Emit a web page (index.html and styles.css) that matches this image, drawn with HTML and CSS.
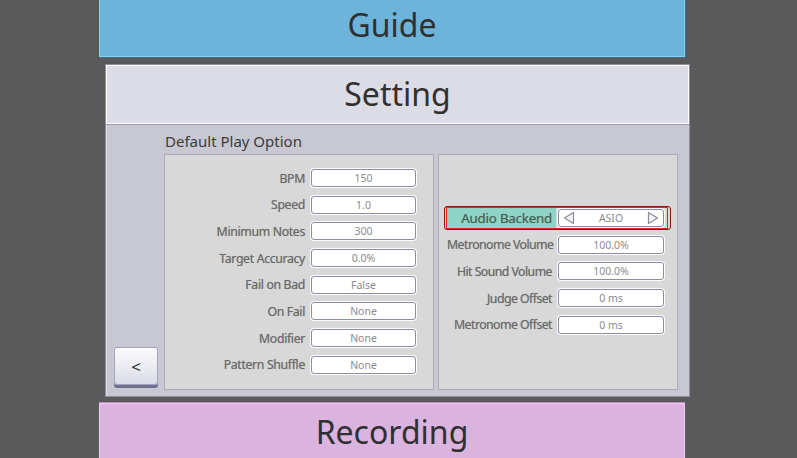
FILE: index.html
```html
<!DOCTYPE html>
<html>
<head>
<meta charset="utf-8">
<link rel="stylesheet" href="styles.css">
</head>
<body>
<div class="screen">
  <div class="tab guide"><span>Guide</span></div>
  <div class="setting">
    <div class="setting-head">Setting</div>
    <div class="setting-body">
      <div class="side">
        <button class="back">&lt;</button>
      </div>
      <div class="main">
        <div class="section-title">Default Play Option</div>
        <div class="panels">
          <div class="panel left">
            <div class="row"><div class="label">BPM</div><div class="field">150</div></div>
            <div class="row"><div class="label">Speed</div><div class="field">1.0</div></div>
            <div class="row"><div class="label">Minimum Notes</div><div class="field">300</div></div>
            <div class="row"><div class="label">Target Accuracy</div><div class="field">0.0%</div></div>
            <div class="row"><div class="label">Fail on Bad</div><div class="field">False</div></div>
            <div class="row"><div class="label">On Fail</div><div class="field">None</div></div>
            <div class="row"><div class="label">Modifier</div><div class="field">None</div></div>
            <div class="row"><div class="label">Pattern Shuffle</div><div class="field">None</div></div>
          </div>
          <div class="panel right">
            <div class="row selected">
              <div class="label">Audio Backend</div>
              <div class="field select">
                <svg class="arrow" width="12" height="14" viewBox="0 0 12 14"><path d="M10.5 1.5 L1.5 7 L10.5 12.5 Z" fill="#f4f4f6" stroke="#8a8a98" stroke-width="1.2" stroke-linejoin="round"/></svg>
                <span>ASIO</span>
                <svg class="arrow" width="12" height="14" viewBox="0 0 12 14"><path d="M1.5 1.5 L10.5 7 L1.5 12.5 Z" fill="#f4f4f6" stroke="#8a8a98" stroke-width="1.2" stroke-linejoin="round"/></svg>
              </div>
            </div>
            <div class="row"><div class="label">Metronome Volume</div><div class="field">100.0%</div></div>
            <div class="row"><div class="label">Hit Sound Volume</div><div class="field">100.0%</div></div>
            <div class="row"><div class="label">Judge Offset</div><div class="field">0 ms</div></div>
            <div class="row"><div class="label">Metronome Offset</div><div class="field">0 ms</div></div>
          </div>
        </div>
      </div>
    </div>
  </div>
  <div class="tab recording"><span>Recording</span></div>
</div>
</body>
</html>
```
FILE: styles.css
```css
* { box-sizing: border-box; }
html, body { margin: 0; padding: 0; }
body {
  width: 797px;
  height: 458px;
  overflow: hidden;
  background: #5a5a5a;
  font-family: "Noto Sans", "Open Sans", sans-serif;
  color: #333;
}
.screen {
  display: flex;
  flex-direction: column;
}
.tab {
  width: 586px;
  display: flex;
  align-items: center;
  justify-content: center;
  font-size: 32px;
  color: #303030;
}
.guide {
  margin: -7px 0 0 99px;
  height: 64px;
  background: #6cb4da;
  border: 1px solid #88d0f2;
  border-top: none;
  box-shadow: 1px 1px 0 #3f6f8c;
}
.setting {
  margin: 7px 0 0 105px;
  width: 585px;
  height: 333px;
  border: 1px solid #8e8e9c;
  display: flex;
  flex-direction: column;
  background: #c8c8d2;
}
.setting-head {
  height: 59px;
  flex: none;
  display: flex;
  align-items: center;
  justify-content: center;
  padding-bottom: 2px;
  font-size: 32px;
  color: #303030;
  background: #dcdce6;
  border: 1px solid #ffffff;
  box-shadow: 0 1px 0 #9c9cac;
}
.setting-body {
  flex: 1;
  display: flex;
  border-left: 1px solid #dedee6;
  padding: 0 12px 6px 0;
  margin-top: 1px;
}
.side {
  width: 57px;
  flex: none;
  display: flex;
  flex-direction: column;
  justify-content: flex-end;
  padding: 0 0 2px 7px;
}
.back {
  width: 44px;
  height: 38px;
  margin-bottom: 3px;
  border: 1px solid #a4a4bc;
  border-radius: 3px;
  background: linear-gradient(#fbfbfd, #dcdce8);
  box-shadow: 0 3px 0 #6e6e8e;
  font-family: "Noto Sans", sans-serif;
  font-size: 17px;
  color: #333;
  padding: 0;
}
.main {
  flex: 1;
  display: flex;
  flex-direction: column;
}
.section-title {
  margin: 6px 0 3px 1px;
  line-height: 20px;
  font-size: 15px;
  color: #3c3c3c;
}
.panels {
  display: flex;
  gap: 4px;
  height: 236px;
}
.panel {
  background: #d8d8d8;
  border: 1px solid #adadb6;
  display: flex;
  flex-direction: column;
  gap: 8.7px;
}
.panel.left {
  width: 270px;
  padding: 14px 17px 0 0;
}
.panel.right {
  width: 240px;
  padding: 54px 13px 0 8px;
}
.row {
  display: flex;
  align-items: center;
  height: 18px;
  gap: 6px;
  position: relative;
}
.label {
  flex: 1;
  min-width: 0;
  text-align: right;
  font-size: 12.3px;
  letter-spacing: -0.35px;
  color: #6a6a6a;
  white-space: nowrap;
  text-shadow: 0 0 0.7px rgba(0,0,0,0.3);
}
.panel.right .label {
  letter-spacing: -0.55px;
}
.field {
  width: 105px;
  height: 18px;
  flex: none;
  background: #fff;
  border: 1px solid #8c8ca6;
  border-radius: 3px;
  box-shadow: 0 0 0 1px #fbfbfd;
  display: flex;
  align-items: center;
  justify-content: center;
  font-size: 10.5px;
  color: #8c8c8c;
}
.panel.right .field { width: 106px; }
.panel.right .row.selected .label {
  align-self: stretch;
  margin: -1px -4px -1px 0;
  padding-right: 4px;
  background: #8fd4c4;
  color: #4a5e5a;
  font-size: 13.3px;
  letter-spacing: -0.2px;
  line-height: 20px;
}
.row.selected::before {
  content: "";
  position: absolute;
  inset: -3px -7px -3px -3px;
  border: 1px solid #8c1414;
  border-radius: 3px;
  pointer-events: none;
}
.row.selected::after {
  content: "";
  position: absolute;
  inset: -2px -4px -2px -1px;
  border: 1px solid #e02828;
  pointer-events: none;
}
.field.select {
  justify-content: space-between;
  padding: 0 4px 0 4px;
}
.arrow { display: block; }
.recording {
  margin: 6px 0 0 99px;
  height: 60px;
  background: #dab4de;
  border: 1px solid #f4cbf4;
  box-shadow: 0 -1px 0 #b98fc0;
  align-items: flex-start;
  padding-top: 6px;
}
```
